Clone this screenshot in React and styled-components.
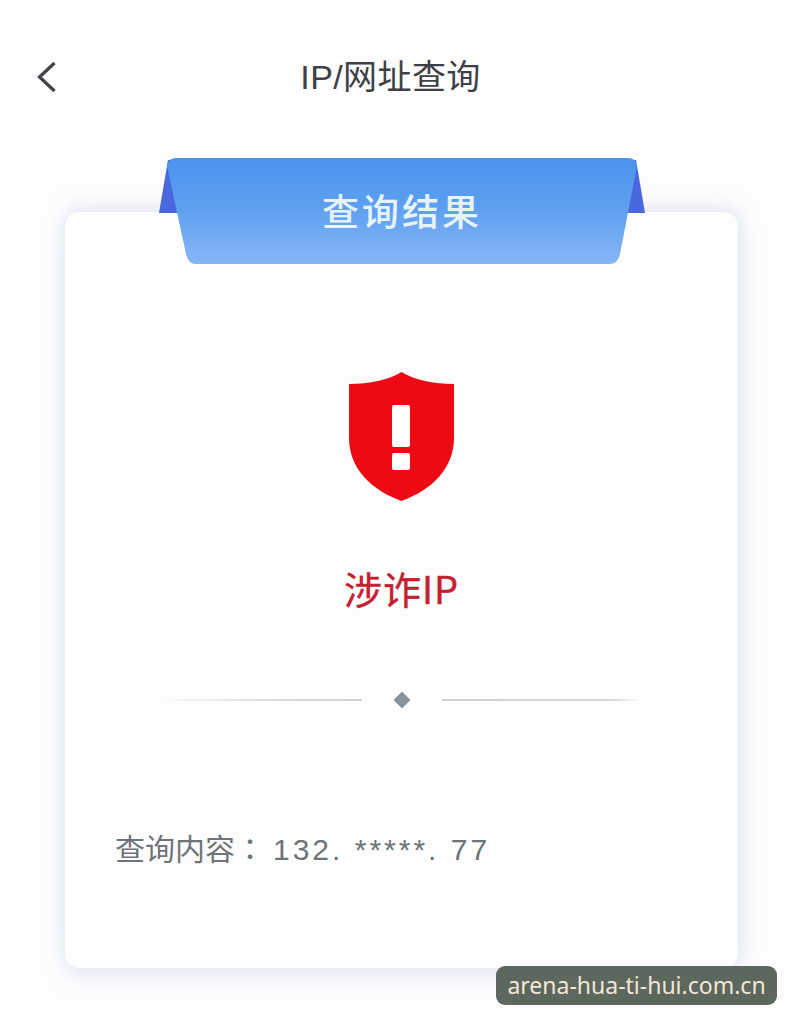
import React from "react";
import styled, { createGlobalStyle } from "styled-components";

const Global = createGlobalStyle`
  html, body { margin: 0; padding: 0; background: #fdfdfe; }
  body { font-family: "Noto Sans CJK SC", "Noto Sans", sans-serif; }
  * { box-sizing: border-box; }
`;

const Page = styled.div`
  position: relative;
  width: 800px;
  height: 1028px;
  overflow: hidden;
  background: #fdfdfe;
  display: flex;
  flex-direction: column;
`;

const Header = styled.header`
  height: 212px;
  flex: none;
  padding: 51px 36px 0;
  position: relative;
  display: flex;
  align-items: flex-start;
`;

const BackButton = styled.button`
  border: 0;
  padding: 0;
  background: none;
  width: 22px;
  height: 52px;
  display: flex;
  align-items: center;
`;

const Title = styled.h1`
  flex: 1;
  margin: 0 0 0 -22px;
  padding-right: 19px;
  text-align: center;
  font-family: "Liberation Sans", "Noto Sans CJK SC", sans-serif;
  font-size: 34px;
  line-height: 52px;
  font-weight: 400;
  color: #3d4145;
  letter-spacing: 0.4px;
`;

const Card = styled.main`
  width: 673px;
  height: 756px;
  margin-left: 65px;
  flex: none;
  background: #fdfdfe;
  border-radius: 14px;
  box-shadow: 0 12px 20px rgba(205, 213, 234, 0.3), 6px 0 16px rgba(212, 219, 238, 0.28),
    -4px 0 12px rgba(212, 219, 238, 0.18), 0 -10px 18px rgba(208, 212, 232, 0.24);
  display: flex;
  flex-direction: column;
  align-items: center;
`;

const Ribbon = styled.div`
  position: relative;
  width: 486px;
  height: 106px;
  margin-top: -54px;
  margin-left: 1px;
  flex: none;
`;

const Fold = styled.span`
  position: absolute;
  top: 2px;
  ${(p) => (p.$side === "left" ? "left: 0;" : "right: 0;")}
  width: 24px;
  height: 53px;
  background: #4a68de;
  clip-path: ${(p) =>
    p.$side === "left"
      ? "polygon(9px 0, 24px 0, 24px 100%, 0 100%)"
      : "polygon(0 0, 15px 0, 24px 100%, 0 100%)"};
`;

const RibbonFace = styled.div`
  position: absolute;
  top: 0;
  left: 8px;
  width: 470px;
  height: 106px;
  background: linear-gradient(180deg, #4c93ee 0%, #5c9ff0 45%, #86b6f4 100%);
  clip-path: path("M9 0 H461 Q469 0 470 8 L453 96 Q451 106 442 106 H29 Q21 106 19 96 L0 8 Q1 0 9 0 Z");
  display: flex;
  align-items: center;
  justify-content: center;
  padding-bottom: 2px;
  font-size: 37px;
  font-weight: 500;
  letter-spacing: 3px;
  color: #e6f3f8;
`;

const ShieldIcon = styled.svg`
  display: block;
  width: 107px;
  height: 129px;
  margin-top: 108px;
  flex: none;
`;

const Verdict = styled.div`
  margin-top: 57px;
  height: 60px;
  font-size: 38px;
  font-weight: 400;
  -webkit-text-stroke: 0.4px #c5202f;
  line-height: 60px;
  color: #c5202f;
  letter-spacing: 1px;
`;

const Divider = styled.div`
  align-self: flex-start;
  margin: 76px 0 0 95px;
  display: flex;
  align-items: center;
  gap: 34px;
`;

const DividerLine = styled.span`
  width: ${(p) => (p.$dir === "left" ? 202 : 198)}px;
  height: 2px;
  background: ${(p) =>
    p.$dir === "left"
      ? "linear-gradient(90deg, rgba(205,210,216,0) 0%, #dcdfe3 50%, #cfd4d9 100%)"
      : "linear-gradient(90deg, #cfd4d9 0%, #d6d9de 85%, rgba(205,210,216,0) 100%)"};
`;

const Diamond = styled.i`
  display: block;
  width: 12px;
  height: 12px;
  flex: none;
  transform: rotate(45deg);
  background: #8a949f;
  border-radius: 1px;
`;

const QueryRow = styled.div`
  align-self: flex-start;
  margin: 118px 0 0 50px;
  font-size: 30px;
  line-height: 46px;
  color: #6f7479;
  white-space: nowrap;
`;

const Colon = styled.span`
  font-family: "Noto Sans CJK TC", sans-serif;
`;

const Value = styled.span`
  margin-left: 8px;
  letter-spacing: 3px;
  font-family: "Liberation Sans", "Noto Sans CJK SC", sans-serif;
`;

const Watermark = styled.div`
  position: absolute;
  left: 496px;
  top: 966px;
  width: 281px;
  height: 39px;
  border-radius: 9px;
  background: #5c675d;
  color: #f4e6d8;
  font-family: "Noto Sans", sans-serif;
  font-size: 23px;
  line-height: 39px;
  text-align: center;
  white-space: nowrap;
`;

export default function App() {
  return (
    <Page>
      <Global />
      <Header>
        <BackButton aria-label="返回">
          <svg width="22" height="34" viewBox="0 0 22 34" fill="none">
            <path d="M18.5 3 L3.5 17 L18.5 31" stroke="#3f4347" strokeWidth="3.2" />
          </svg>
        </BackButton>
        <Title>IP/网址查询</Title>
      </Header>
      <Card>
        <Ribbon>
          <Fold $side="left" />
          <Fold $side="right" />
          <RibbonFace>查询结果</RibbonFace>
        </Ribbon>
        <ShieldIcon viewBox="0 0 107 129" aria-hidden="true">
          <path
            fill="#ee0a14"
            d="M53.5 0 C66 8 86 12 106 12 L106 66 C106 96 84 118 53.5 129 C23 118 1 96 1 66 L1 12 C21 12 41 8 53.5 0 Z"
          />
          <rect x="44" y="33" width="18" height="42" rx="2" fill="#fdfdfe" />
          <rect x="44" y="81" width="18" height="17" rx="2" fill="#fdfdfe" />
        </ShieldIcon>
        <Verdict>涉诈IP</Verdict>
        <Divider>
          <DividerLine $dir="left" />
          <Diamond />
          <DividerLine $dir="right" />
        </Divider>
        <QueryRow>
          查询内容<Colon>：</Colon>
          <Value>132. *****. 77</Value>
        </QueryRow>
      </Card>
      <Watermark>arena-hua-ti-hui.com.cn</Watermark>
    </Page>
  );
}
